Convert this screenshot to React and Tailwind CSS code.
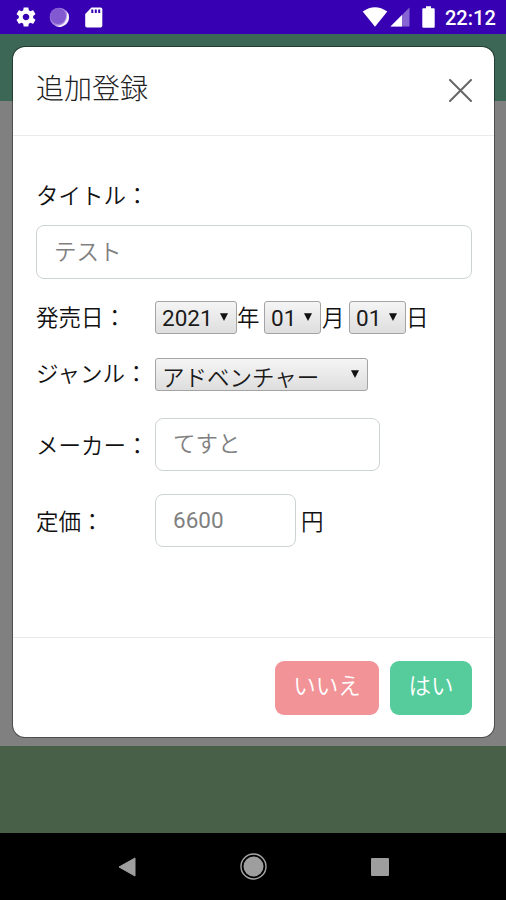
import React from "react";

function StatusBar() {
  return (
    <div className="flex h-[34px] shrink-0 items-center justify-between bg-[#3700b3] pl-[14px] pr-[10px]">
      <div className="flex items-center">
        <svg className="h-[24px] w-[24px]" viewBox="0 0 24 24" fill="#fff">
          <path d="M19.14 12.94c.04-.3.06-.61.06-.94 0-.32-.02-.64-.07-.94l2.03-1.58c.18-.14.23-.41.12-.61l-1.92-3.32c-.12-.22-.37-.29-.59-.22l-2.39.96c-.5-.38-1.03-.7-1.62-.94l-.36-2.54c-.04-.24-.24-.41-.48-.41h-3.84c-.24 0-.43.17-.47.41l-.36 2.54c-.59.24-1.13.57-1.62.94l-2.39-.96c-.22-.08-.47 0-.59.22L2.74 8.87c-.12.21-.08.47.12.61l2.03 1.58c-.05.3-.09.63-.09.94s.02.64.07.94l-2.03 1.58c-.18.14-.23.41-.12.61l1.92 3.32c.12.22.37.29.59.22l2.39-.96c.5.38 1.03.7 1.62.94l.36 2.54c.05.24.24.41.48.41h3.84c.24 0 .44-.17.47-.41l.36-2.54c.59-.24 1.13-.56 1.62-.94l2.39.96c.22.08.47 0 .59-.22l1.92-3.32c.12-.22.07-.47-.12-.61l-2.01-1.58zM12 15.3c-1.82 0-3.3-1.48-3.3-3.3s1.48-3.3 3.3-3.3 3.3 1.48 3.3 3.3-1.48 3.3-3.3 3.3z" />
        </svg>
        <svg className="ml-[11px] h-[20px] w-[20px]" viewBox="0 0 20 20">
          <circle cx="10.3" cy="10.3" r="9.5" fill="#a98be0" />
          <path d="M17.500 4A9.500 9.500 0 0 1 6 18.800Q12 19.300 15.500 15.500Q19 11 17.500 4Z" fill="#f4effc" />
          <circle cx="9" cy="9" r="8" fill="#8259d0" />
        </svg>
        <svg className="ml-[16px] h-[21px] w-[18px]" viewBox="0 0 18 21">
          <path d="M6.500 .5H15.500Q17.300 .5 17.300 2.300V18.700Q17.300 20.500 15.500 20.500H2Q.2 20.500 .2 18.700V7Z" fill="#fff" />
          <path d="M6.300 2.500h2v3.500h-2zM9.800 2.500h2v3.500h-2zM13.200 2.500h2v3.500h-2z" fill="#3700b3" />
        </svg>
      </div>
      <div className="flex items-center">
        <svg className="h-[20px] w-[26px]" viewBox="0 0 26 20">
          <path d="M.7 4.600Q13-4.200 25.300 4.600L13 19.700Z" fill="#fff" />
        </svg>
        <svg className="ml-[2px] h-[20px] w-[20px]" viewBox="0 0 20 20">
          <path d="M19.500 .5V19.500H.5Z" fill="#8664d2" />
          <path d="M12 8V19.500H.5Z" fill="#fff" />
        </svg>
        <svg className="ml-[12px] h-[22px] w-[13px]" viewBox="0 0 13 22">
          <path d="M4 .3h5v2h2.700q1 0 1 1V20.700q0 1-1 1H1.300q-1 0-1-1V3.300q0-1 1-1H4Z" fill="#fff" />
        </svg>
        <span className="ml-[10px] mt-[2px] w-[51px] whitespace-nowrap font-['Roboto',sans-serif] text-[20px] font-medium leading-[24px] text-white">22:12</span>
      </div>
    </div>
  );
}

function Select({ value, className = "", textClass = "" }) {
  return (
    <div className={"flex h-[33px] shrink-0 items-center justify-between rounded-[3px] border border-[#a4a4a4] bg-linear-to-b from-[#f5f5f5] to-[#dedede] pl-[6px] pr-[8px] text-[#1a1a1a] " + className}>
      <span className={"whitespace-nowrap " + textClass}>{value}</span>
      <svg className="-mt-[2px] h-[8px] w-[8px] shrink-0" viewBox="0 0 8 8">
        <path d="M0 .3H8L4 8Z" fill="#111" />
      </svg>
    </div>
  );
}

function Field({ value, className = "" }) {
  return (
    <div className={"flex shrink-0 items-center rounded-[8px] border border-[#ced4d6] bg-white pl-[17px] text-[#808080] " + className}>
      {value}
    </div>
  );
}

function Label({ children, className = "" }) {
  return <div className={"w-[119px] shrink-0 whitespace-nowrap " + className}>{children}</div>;
}

function Modal() {
  return (
    <div className="absolute left-[12px] top-[46px] h-[692px] w-[483px] rounded-[13px] border border-black/40 bg-white bg-clip-padding">
      <div className="flex h-[89px] justify-between border-b border-[#eaeaea] pl-[23px] pr-[22px]">
        <h5 className="pt-[19px] text-[28px] font-light leading-[42px] text-[#222]">追加登録</h5>
        <svg className="mt-[32px] h-[23px] w-[23px]" viewBox="0 0 23 23" fill="none" stroke="#666" strokeWidth="2" strokeLinecap="round">
          <path d="M1 1L22 22M22 1L1 22" />
        </svg>
      </div>
      <div className="h-[501px] px-[23px] pt-[42px]">
        <div className="h-[32px] leading-[32px]">タイトル：</div>
        <Field value="テスト" className="mt-[15px] h-[54px] w-[436px] pb-[5px]" />
        <div className="mt-[22px] flex h-[33px] items-center">
          <Label className="pb-[4px]">発売日：</Label>
          <Select value="2021" className="w-[82px]" textClass="font-['Roboto',sans-serif] font-normal" />
          <span className="w-[27px] pb-[4px]">年</span>
          <Select value="01" className="w-[57px]" textClass="font-['Roboto',sans-serif] font-normal" />
          <span className="w-[28px] pb-[4px] pl-px">月</span>
          <Select value="01" className="w-[57px]" textClass="font-['Roboto',sans-serif] font-normal" />
          <span className="pb-[4px]">日</span>
        </div>
        <div className="mt-[24px] flex h-[33px] items-center">
          <Label className="pb-[5px]">ジャンル：</Label>
          <Select value="アドベンチャー" className="w-[213px]" textClass="pt-[3px]" />
        </div>
        <div className="mt-[27px] flex h-[53px] items-center">
          <Label className="pb-[2px]">メーカー：</Label>
          <Field value="てすと" className="h-[53px] w-[225px] pb-[5px]" />
        </div>
        <div className="mt-[23px] flex h-[53px] items-center">
          <Label className="pb-[2px]">定価：</Label>
          <Field value="6600" className="h-[53px] w-[141px] pb-px font-['Roboto',sans-serif] font-normal" />
          <span className="ml-[5px] pb-[2px]">円</span>
        </div>
      </div>
      <div className="flex h-[100px] justify-end gap-[11px] border-t border-[#eaeaea] pr-[22px] pt-[23px]">
        <button className="h-[54px] w-[104px] rounded-[9px] bg-[#f29397] pb-[8px] text-white">いいえ</button>
        <button className="h-[54px] w-[82px] rounded-[9px] bg-[#56cc9d] pb-[8px] text-white">はい</button>
      </div>
    </div>
  );
}

export default function App() {
  return (
    <div className="relative flex h-[900px] w-[506px] flex-col overflow-hidden bg-[#808080] font-['Noto_Sans_CJK_JP',sans-serif] text-[22.5px] font-[350] leading-[32px] text-[#111]">
      <StatusBar />
      <div className="h-[67px] shrink-0 bg-[#3c6656]" />
      <div className="grow bg-[#808080]" />
      <div className="h-[87px] shrink-0 bg-[#486048]" />
      <div className="flex h-[67px] shrink-0 items-center justify-center gap-[104px] bg-black">
        <svg className="h-[20px] w-[18px]" viewBox="0 0 18 20">
          <path d="M17 1V19L1 10Z" fill="#9e9e9e" stroke="#9e9e9e" strokeLinejoin="round" />
        </svg>
        <svg className="h-[27px] w-[27px]" viewBox="0 0 27 27">
          <circle cx="13.500" cy="13.500" r="12.500" fill="none" stroke="#a8a8a8" strokeWidth="1.400" />
          <circle cx="13.500" cy="13.500" r="10" fill="#9e9e9e" />
        </svg>
        <div className="h-[18px] w-[18px] rounded-[1px] bg-[#9e9e9e]" />
      </div>
      <Modal />
    </div>
  );
}
